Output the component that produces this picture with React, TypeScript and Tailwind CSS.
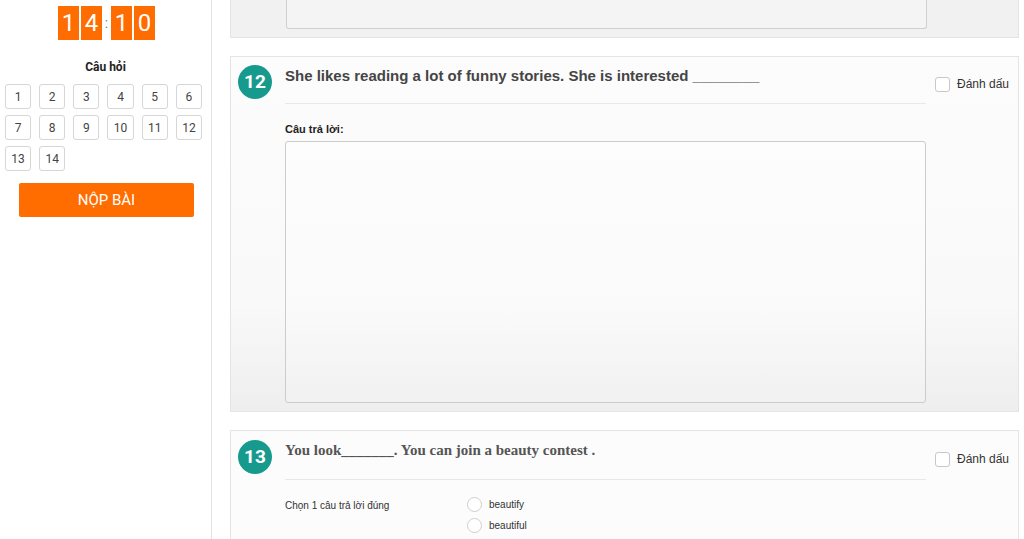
import React from "react";

const numbers = [1, 2, 3, 4, 5, 6, 7, 8, 9, 10, 11, 12, 13, 14];

function Badge({ n }: { n: number }) {
  return (
    <div className="w-[34px] h-[34px] shrink-0 rounded-full bg-[#179a8e] text-white flex items-center justify-center text-[19px] font-bold font-['Roboto',sans-serif]">
      {n}
    </div>
  );
}

function MarkBox() {
  return (
    <label className="flex items-center gap-[7px] text-[12px] text-[#333] font-['Liberation_Sans',Arial,sans-serif]">
      <span className="w-[15px] h-[15px] rounded-[3px] border border-[#c8c8c8] bg-white" />
      Đánh dấu
    </label>
  );
}

export default function App() {
  return (
    <div className="flex h-[539px] w-[1024px] overflow-hidden bg-white">
      {/* Sidebar */}
      <aside className="w-[212px] shrink-0 border-r border-[#e3e3e3] font-['Roboto',sans-serif]">
        <div className="flex justify-center items-center pt-[6px] pl-[2px]">
          <div className="flex gap-[2px]">
            <span className="w-[21px] h-[34px] bg-[#ff6c00] text-white text-[24px] flex items-center justify-center">1</span>
            <span className="w-[21px] h-[34px] bg-[#ff6c00] text-white text-[24px] flex items-center justify-center">4</span>
          </div>
          <span className="w-[9px] text-center text-[14px] text-[#6a8aa0] leading-none">:</span>
          <div className="flex gap-[2px]">
            <span className="w-[21px] h-[34px] bg-[#ff6c00] text-white text-[24px] flex items-center justify-center">1</span>
            <span className="w-[21px] h-[34px] bg-[#ff6c00] text-white text-[24px] flex items-center justify-center">0</span>
          </div>
        </div>
        <div className="mt-[18px] text-center text-[12px] font-bold text-[#222]">Câu hỏi</div>
        <div className="mt-[8px] ml-[5px] w-[197px] grid grid-cols-6 gap-x-[8px] gap-y-[6px]">
          {numbers.map((n) => (
            <button
              key={n}
              className="h-[25px] rounded-[3px] border border-[#d6d6d6] bg-white text-[12px] text-[#444] flex items-center justify-center"
            >
              {n}
            </button>
          ))}
        </div>
        <button className="mt-[12px] ml-[19px] w-[175px] h-[34px] bg-[#ff6c00] text-white text-[15px] rounded-[2px]">
          NỘP BÀI
        </button>
      </aside>

      {/* Main */}
      <main className="flex-1 pl-[18px] pr-[5px] flex flex-col gap-[18px]">
        {/* previous question (cut off) */}
        <div className="h-[38px] shrink-0 border-x border-b border-[#e4e4e4] bg-[#f1f1f1]">
          <div className="ml-[55px] w-[641px] h-[29px] border-x border-b border-[#cfcfcf] rounded-b-[3px] bg-[#f4f4f4]" />
        </div>

        {/* Question 12 */}
        <div className="shrink-0 h-[356px] border border-[#e4e4e4] bg-linear-to-b from-[#fcfcfc] via-[#f9f9f9] via-70% to-[#eeeeee] flex pl-[7px] pt-[8px]">
          <Badge n={12} />
          <div className="ml-[13px] w-[641px] pt-[1px]">
            <div className="h-[38px] border-b border-[#e8e8e8] text-[15px] leading-[20px] font-bold text-[#454545] font-['Liberation_Sans',Arial,sans-serif]">
              She likes reading a lot of funny stories. She is interested ________
            </div>
            <div className="mt-[18px] text-[11px] leading-[14px] font-bold text-[#222] font-['Liberation_Sans',Arial,sans-serif]">
              Câu trả lời:
            </div>
            <div className="mt-[5px] h-[262px] rounded-[3px] border border-[#cccccc] bg-linear-to-b from-[#fdfdfd] via-[#fafafa] via-65% to-[#f1f1f1]" />
          </div>
          <div className="ml-[9px] pt-[10px]">
            <MarkBox />
          </div>
        </div>

        {/* Question 13 */}
        <div className="shrink-0 h-[140px] border border-[#e4e4e4] bg-[#fcfcfc] flex pl-[7px] pt-[9px]">
          <Badge n={13} />
          <div className="ml-[13px] w-[641px]">
            <div className="h-[40px] border-b border-[#e8e8e8] text-[15px] leading-[20px] font-bold text-[#555] font-['Liberation_Serif','Times_New_Roman',serif]">
              You look_______. You can join a beauty contest .
            </div>
            <div className="mt-[17px] flex text-[10px] text-[#333] font-['Liberation_Sans',Arial,sans-serif]">
              <div className="w-[182px] pt-[1px]">Chọn 1 câu trả lời đúng</div>
              <div className="flex flex-col gap-[6px]">
                {["beautify", "beautiful"].map((o) => (
                  <label key={o} className="flex items-center gap-[7px]">
                    <span className="w-[15px] h-[15px] rounded-full border border-[#cfcfcf] bg-white" />
                    {o}
                  </label>
                ))}
              </div>
            </div>
          </div>
          <div className="ml-[9px] pt-[10px]">
            <MarkBox />
          </div>
        </div>
      </main>
    </div>
  );
}
